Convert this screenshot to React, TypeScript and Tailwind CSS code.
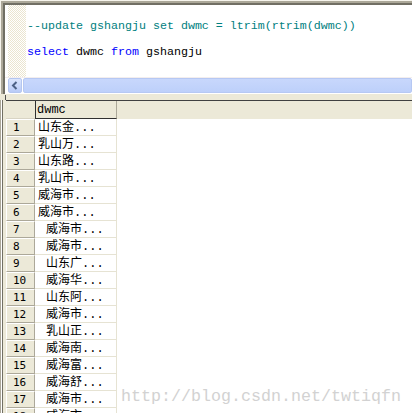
import React from "react";

const rows: { n: number; t: string; indent: boolean }[] = [
  { n: 1, t: "山东金...", indent: false },
  { n: 2, t: "乳山万...", indent: false },
  { n: 3, t: "山东路...", indent: false },
  { n: 4, t: "乳山市...", indent: false },
  { n: 5, t: "威海市...", indent: false },
  { n: 6, t: "威海市...", indent: false },
  { n: 7, t: "威海市...", indent: true },
  { n: 8, t: "威海市...", indent: true },
  { n: 9, t: "山东广...", indent: true },
  { n: 10, t: "威海华...", indent: true },
  { n: 11, t: "山东阿...", indent: true },
  { n: 12, t: "威海市...", indent: true },
  { n: 13, t: "乳山正...", indent: true },
  { n: 14, t: "威海南...", indent: true },
  { n: 15, t: "威海富...", indent: true },
  { n: 16, t: "威海舒...", indent: true },
  { n: 17, t: "威海市...", indent: true },
  { n: 18, t: "威海市...", indent: true },
];

export default function App() {
  return (
    <div className="relative flex h-[413px] w-[412px] flex-col overflow-hidden bg-[#ece9d8]">
      {/* editor pane */}
      <div className="h-[94px] shrink-0 border-l border-t border-[#f6f4ec]">
        <div className="h-full border-l-2 border-t-2 border-[#aca899]">
          <div className="flex h-full flex-col border-l-2 border-t-2 border-[#716f64] bg-white">
            <div className="flex h-[72px]">
              <div className="w-[3px] bg-white" />
              <div className="w-[18px] bg-[repeating-conic-gradient(#ebe5cf_0%_25%,#ffffff_0%_50%)] bg-[length:2px_2px]" />
              <div className="flex-1 whitespace-pre pl-[1px] pt-[15px] font-['Liberation_Mono',monospace] text-[11.67px]">
                <div className="h-[13px] leading-[13px] text-[#008080]">
                  --update gshangju set dwmc = ltrim(rtrim(dwmc))
                </div>
                <div className="mt-[13px] h-[13px] leading-[13px] text-black">
                  <span className="text-[#0000ff]">select</span> dwmc{" "}
                  <span className="text-[#0000ff]">from</span> gshangju
                </div>
              </div>
            </div>
            {/* horizontal scrollbar */}
            <div className="flex h-[17px] border-t border-[#f3eeee] bg-white pb-[1px] pl-[3px]">
              <div className="flex w-[14px] items-center justify-center rounded-[2px] border border-[#b4c6ef] bg-gradient-to-b from-[#dbe5fd] to-[#b9cbf7]">
                <svg width="8" height="9" viewBox="0 0 8 9">
                  <path d="M5.5 1 L2 4.5 L5.5 8" fill="none" stroke="#4d6185" strokeWidth="2" />
                </svg>
              </div>
              <div className="ml-[1px] flex-1 rounded-[2px] border border-[#b6c8f3] bg-gradient-to-b from-[#c8d7fc] to-[#bdd0fa]" />
            </div>
          </div>
        </div>
      </div>

      {/* splitter */}
      <div className="flex h-[6px] shrink-0">
        <div className="ml-[5px] mt-[1px] h-[5px] w-[1px] bg-[#505050]" />
      </div>

      {/* results grid pane */}
      <div className="flex flex-1">
        <div className="w-[1px] bg-[#aca899]" />
        <div className="w-[1px] bg-white" />
        <div className="w-[1px] bg-[#716f64]" />
        <div className="w-[3px] bg-[#ece9d8]" />
        <div className="flex flex-1 flex-col border-t border-[#404040] bg-white">
          {/* header */}
          <div className="flex h-[18px] shrink-0 bg-[#ece9d8]">
            <div className="w-[29px] border-b border-[#d8d4c4]" />
            <div className="flex w-[82px] items-center border-b border-l border-r border-b-[#303030] border-l-[#303030] border-r-[#aca899] pl-[1px] pt-[1px] font-['Liberation_Mono',monospace] text-[12px] leading-[17px] text-black">
              dwmc
            </div>
            <div className="flex-1" />
          </div>
          {rows.map((r) => (
            <div key={r.n} className="flex h-[17px] shrink-0">
              <div className="flex w-[29px] items-center border-b border-l border-r border-t border-b-[#aca899] border-l-white border-r-[#aca899] border-t-white bg-[#ece9d8] pl-[6px] pt-[1px] font-['DejaVu_Sans_Mono',monospace] text-[11px] leading-[14px] text-black">
                {r.n}
              </div>
              <div
                className={
                  "flex w-[82px] items-center overflow-hidden whitespace-pre border-b border-r border-[#e6e3d3] pt-[2px] font-['Liberation_Mono','Noto_Sans_CJK_SC',monospace] text-[12px] leading-[14px] text-black " +
                  (r.indent ? "pl-[11px]" : "pl-[3px]")
                }
              >
                {r.t}
              </div>
              <div className="flex-1" />
            </div>
          ))}
        </div>
      </div>

      {/* watermark */}
      <div className="pointer-events-none absolute left-[121px] top-[388px] whitespace-pre font-['Liberation_Mono',monospace] text-[16.67px] leading-[17px] text-[#d2d2d2]">
        http://blog.csdn.net/twtiqfn
      </div>
    </div>
  );
}
